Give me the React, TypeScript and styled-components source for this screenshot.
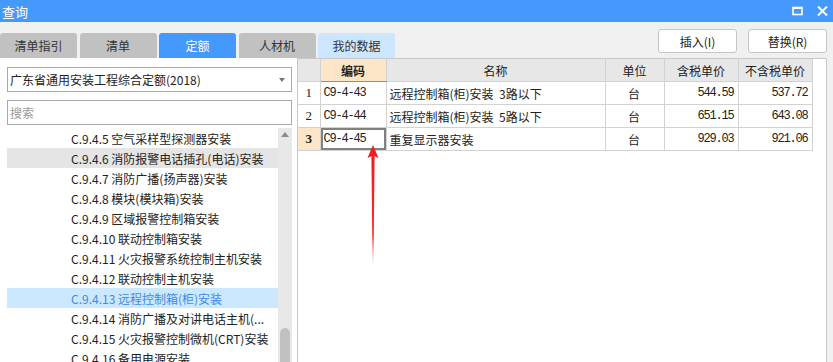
import React from 'react'
import styled, { createGlobalStyle } from 'styled-components'

const GlobalStyle = createGlobalStyle`
  html, body {
    margin: 0;
    padding: 0;
    background: #f0f0f0;
  }
  body {
    font-family: "Noto Sans CJK SC", "Noto Sans", sans-serif;
    font-size: 12px;
    color: #222;
  }
`

const BLUE = '#4599fd'

const Window = styled.div`
  width: 833px;
  height: 362px;
  display: flex;
  flex-direction: column;
  overflow: hidden;
  background: #f0f0f0;
`

const TitleBar = styled.div`
  height: 22px;
  flex: none;
  display: flex;
  align-items: center;
  justify-content: space-between;
  padding: 0 5px 0 2px;
  background: ${BLUE};
  color: #fff;
  font-size: 13px;
`

const WinButtons = styled.div`
  display: flex;
  align-items: center;
  gap: 14px;
`

const Toolbar = styled.div`
  height: 36px;
  flex: none;
  display: flex;
  justify-content: space-between;
`

const Tabs = styled.div`
  align-self: flex-end;
  display: flex;
  gap: 2.5px;
`

type TabKind = 'normal' | 'active' | 'light'

const tabBg: Record<TabKind, string> = {
  normal: '#c1c1c1',
  active: BLUE,
  light: '#cde6ff',
}

const Tab = styled.div<{ $kind: TabKind }>`
  width: 77px;
  height: 25px;
  display: flex;
  align-items: center;
  justify-content: center;
  border-radius: 3px 3px 0 0;
  background: ${(p) => tabBg[p.$kind]};
  color: ${(p) => (p.$kind === 'active' ? '#fff' : '#333')};
`

const Actions = styled.div`
  display: flex;
  gap: 11px;
  padding: 7px 6px 0 0;
`

const ActionButton = styled.button`
  width: 79px;
  height: 24px;
  background: #fff;
  border: 1px solid #c6c6c6;
  border-radius: 3px;
  font-family: inherit;
  font-size: 12px;
  color: #222;
  padding: 0;
`

const Main = styled.div`
  flex: 1;
  min-height: 0;
  display: flex;
`

const LeftPanel = styled.div`
  width: 297px;
  flex: none;
  box-sizing: border-box;
  background: #fff;
  display: flex;
  flex-direction: column;
  padding: 9px 5px 0 7px;
`

const Field = styled.div`
  height: 25px;
  flex: none;
  box-sizing: border-box;
  border: 1px solid #ababab;
  display: flex;
  align-items: center;
  justify-content: space-between;
  padding: 0 6px 0 2px;
  & + & {
    margin-top: 8px;
  }
`

const Placeholder = styled.span`
  color: #9a9a9a;
`

const Caret = styled.span`
  width: 0;
  height: 0;
  border-left: 3.5px solid transparent;
  border-right: 3.5px solid transparent;
  border-top: 4px solid #777;
`

const ListArea = styled.div`
  flex: 1;
  min-height: 0;
  margin-top: 3px;
  display: flex;
`

const List = styled.div`
  flex: 1;
  overflow: hidden;
`

type RowKind = 'plain' | 'hover' | 'selected'

const ListRow = styled.div<{ $kind?: RowKind }>`
  height: 20px;
  line-height: 21px;
  padding-left: 64px;
  white-space: nowrap;
  background: ${(p) =>
    p.$kind === 'hover' ? '#e5e5e5' : p.$kind === 'selected' ? '#cce8ff' : 'transparent'};
  color: ${(p) => (p.$kind === 'selected' ? '#3d8be6' : '#222')};
`

const ScrollTrack = styled.div`
  width: 14px;
  flex: none;
  background: #e8e8e8;
  display: flex;
  flex-direction: column;
  align-items: center;
`

const ScrollArrow = styled.div`
  margin-top: 4px;
  width: 0;
  height: 0;
  border-left: 4.5px solid transparent;
  border-right: 4.5px solid transparent;
  border-bottom: 5px solid #8c8c8c;
`

const ScrollThumb = styled.div`
  margin-top: auto;
  width: 10px;
  height: 34px;
  border-radius: 5px 5px 0 0;
  background: #c1c1c1;
`

const RightPanel = styled.div`
  flex: 1;
  margin-right: 6px;
  position: relative;
  background: #fff;
  border: 1px solid #c9c9c9;
  border-bottom: none;
`

const Grid = styled.table`
  border-collapse: collapse;
  table-layout: fixed;
  width: 514px;
`

const HeadCell = styled.th<{ $hot?: boolean }>`
  height: 22px;
  padding: 0;
  font-weight: ${(p) => (p.$hot ? 700 : 400)};
  background: ${(p) => (p.$hot ? '#fde5c8' : '#e7e7e7')};
  border-right: 1px solid #d2d2d2;
  border-bottom: 1px solid ${(p) => (p.$hot ? '#5a9be6' : '#d2d2d2')};
  color: #222;
  text-align: center;
`

const IndexCell = styled.td<{ $hot?: boolean }>`
  height: 22px;
  padding: 0;
  text-align: center;
  font-family: "Liberation Serif", serif;
  font-size: 13px;
  font-weight: ${(p) => (p.$hot ? 700 : 400)};
  background: ${(p) => (p.$hot ? '#fde5c8' : '#fff')};
  border-right: 1px solid #d2d2d2;
  border-bottom: 1px solid #d2d2d2;
`

const Cell = styled.td<{ $align?: 'left' | 'center' | 'right'; $mono?: boolean; $focus?: boolean }>`
  height: 22px;
  padding: 0 4px 0 3px;
  white-space: pre;
  overflow: hidden;
  text-align: ${(p) => p.$align ?? 'left'};
  font-family: ${(p) =>
    p.$mono ? '"Liberation Mono", monospace' : '"Noto Sans CJK SC", sans-serif'};
  font-size: 12px;
  letter-spacing: ${(p) => (p.$mono ? '-1.2px' : '0')};
  border-right: 1px solid #d2d2d2;
  border-bottom: 1px solid #d2d2d2;
  box-shadow: ${(p) => (p.$focus ? 'inset 1px 0 0 #4a90e2, inset 0 0 0 2px #808080' : 'none')};
`

const ArrowMark = styled.svg`
  position: absolute;
  left: 69px;
  top: 86px;
  pointer-events: none;
`

const treeItems: { label: string; kind?: RowKind }[] = [
  { label: 'C.9.4.5 空气采样型探测器安装' },
  { label: 'C.9.4.6 消防报警电话插孔(电话)安装', kind: 'hover' },
  { label: 'C.9.4.7 消防广播(扬声器)安装' },
  { label: 'C.9.4.8 模块(模块箱)安装' },
  { label: 'C.9.4.9 区域报警控制箱安装' },
  { label: 'C.9.4.10 联动控制箱安装' },
  { label: 'C.9.4.11 火灾报警系统控制主机安装' },
  { label: 'C.9.4.12 联动控制主机安装' },
  { label: 'C.9.4.13 远程控制箱(柜)安装', kind: 'selected' },
  { label: 'C.9.4.14 消防广播及对讲电话主机(...' },
  { label: 'C.9.4.15 火灾报警控制微机(CRT)安装' },
  { label: 'C.9.4.16 备用电源安装' },
]

const rows = [
  { code: 'C9-4-43', name: '远程控制箱(柜)安装  3路以下', unit: '台', tax: '544.59', net: '537.72' },
  { code: 'C9-4-44', name: '远程控制箱(柜)安装  5路以下', unit: '台', tax: '651.15', net: '643.08' },
  { code: 'C9-4-45', name: '重复显示器安装', unit: '台', tax: '929.03', net: '921.06' },
]

const MaxIcon = () => (
  <svg width="11" height="10" viewBox="0 0 11 10">
    <rect x="1" y="1.5" width="9" height="7" fill="none" stroke="#fff" strokeWidth="1.6" />
    <rect x="1" y="1" width="9" height="2" fill="#fff" />
  </svg>
)

const CloseIcon = () => (
  <svg width="11" height="10" viewBox="0 0 11 10">
    <path d="M1 0.5 L10 9.5 M10 0.5 L1 9.5" stroke="#fff" strokeWidth="2" />
  </svg>
)

const RedArrow = () => (
  <ArrowMark width="12" height="120" viewBox="0 0 12 120">
    <defs>
      <linearGradient id="fade" x1="0" y1="0" x2="0" y2="1">
        <stop offset="0" stopColor="#f41c1c" />
        <stop offset="0.75" stopColor="#f52a2a" />
        <stop offset="1" stopColor="#ff5a5a" stopOpacity="0.1" />
      </linearGradient>
    </defs>
    <polygon points="6,0 11.5,13 6,10.5 0.5,13" fill="#f41c1c" />
    <polygon points="4.4,10 7.6,10 6.5,118 5.5,118" fill="url(#fade)" />
  </ArrowMark>
)

export default function App() {
  return (
    <>
      <GlobalStyle />
      <Window>
        <TitleBar>
          <span>查询</span>
          <WinButtons>
            <MaxIcon />
            <CloseIcon />
          </WinButtons>
        </TitleBar>

        <Toolbar>
          <Tabs>
            <Tab $kind="normal">清单指引</Tab>
            <Tab $kind="normal">清单</Tab>
            <Tab $kind="active">定额</Tab>
            <Tab $kind="normal">人材机</Tab>
            <Tab $kind="light">我的数据</Tab>
          </Tabs>
          <Actions>
            <ActionButton>插入(I)</ActionButton>
            <ActionButton>替换(R)</ActionButton>
          </Actions>
        </Toolbar>

        <Main>
          <LeftPanel>
            <Field>
              <span>广东省通用安装工程综合定额(2018)</span>
              <Caret />
            </Field>
            <Field>
              <Placeholder>搜索</Placeholder>
            </Field>
            <ListArea>
              <List>
                {treeItems.map((item) => (
                  <ListRow key={item.label} $kind={item.kind}>
                    {item.label}
                  </ListRow>
                ))}
              </List>
              <ScrollTrack>
                <ScrollArrow />
                <ScrollThumb />
              </ScrollTrack>
            </ListArea>
          </LeftPanel>

          <RightPanel>
            <Grid>
              <colgroup>
                <col style={{ width: 22 }} />
                <col style={{ width: 66 }} />
                <col style={{ width: 219 }} />
                <col style={{ width: 59 }} />
                <col style={{ width: 74 }} />
                <col style={{ width: 74 }} />
              </colgroup>
              <thead>
                <tr>
                  <HeadCell />
                  <HeadCell $hot>编码</HeadCell>
                  <HeadCell>名称</HeadCell>
                  <HeadCell>单位</HeadCell>
                  <HeadCell>含税单价</HeadCell>
                  <HeadCell>不含税单价</HeadCell>
                </tr>
              </thead>
              <tbody>
                {rows.map((r, i) => {
                  const current = i === rows.length - 1
                  return (
                    <tr key={r.code}>
                      <IndexCell $hot={current}>{i + 1}</IndexCell>
                      <Cell $mono $focus={current}>{r.code}</Cell>
                      <Cell>{r.name}</Cell>
                      <Cell $align="center">{r.unit}</Cell>
                      <Cell $align="right" $mono>{r.tax}</Cell>
                      <Cell $align="right" $mono>{r.net}</Cell>
                    </tr>
                  )
                })}
              </tbody>
            </Grid>
            <RedArrow />
          </RightPanel>
        </Main>
      </Window>
    </>
  )
}
